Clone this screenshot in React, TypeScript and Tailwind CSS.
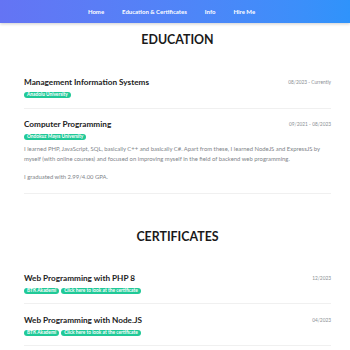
import React from 'react';

const education = [
  {
    title: 'Management Information Systems',
    school: 'Anadolu University',
    date: '08/2023 - Currently',
    text: [] as string[],
  },
  {
    title: 'Computer Programming',
    school: 'Ondokuz Mayıs University',
    date: '09/2021 - 08/2023',
    text: [
      'I learned PHP, JavaScript, SQL, basically C++ and basically C#. Apart from these, I learned NodeJS and ExpressJS by myself (with online courses) and focused on improving myself in the field of backend web programming.',
      'I graduated with 2.99/4.00 GPA.',
    ],
  },
];

const certificates = [
  { title: 'Web Programming with PHP 8', org: 'BTK Akademi', date: '12/2023' },
  { title: 'Web Programming with Node.JS', org: 'BTK Akademi', date: '04/2023' },
];

function Badge({ children }: { children: React.ReactNode }) {
  return (
    <span className="inline-flex items-center h-[6px] rounded-full bg-[#20c997] px-[3px] text-[4.8px] font-bold text-white">
      {children}
    </span>
  );
}

function Heading({ children }: { children: React.ReactNode }) {
  return (
    <h2 className="text-center text-[12.4px] font-bold text-[#1a1a1a] leading-[18px]">{children}</h2>
  );
}

function Row({ title, date }: { title: string; date: string }) {
  return (
    <div className="flex items-center justify-between h-[11px]">
      <h3 className="text-[8.2px] font-bold text-[#222] leading-[11px]">{title}</h3>
      <span className="text-[4.8px] text-[#8a8f94] leading-[11px]">{date}</span>
    </div>
  );
}

export default function App() {
  return (
    <div className="w-[350px] h-[350px] overflow-hidden bg-white" style={{ fontFamily: 'Lato, "Open Sans", sans-serif' }}>
      <nav className="h-[23px] bg-gradient-to-r from-[#6474f4] to-[#2f93fb] shadow-[0_1px_3px_rgba(0,0,0,0.2)] flex items-center justify-center gap-[18px] pr-[7px] text-[6px] font-bold text-white">
        <span>Home</span>
        <span>Education &amp; Certificates</span>
        <span>Info</span>
        <span>Hire Me</span>
      </nav>

      <div className="pl-6 pr-[19px]">
        <div className="mt-[8px]">
          <Heading>EDUCATION</Heading>
        </div>

        <div className="mt-[28px]">
          {education.map((e, i) => (
            <div key={e.title} className={`${i > 0 ? 'pt-[9.5px] pb-[11px]' : 'pb-[10px]'} border-b border-[#f0f0f0]`}>
              <Row title={e.title} date={e.date} />
              <div className="mt-[4px] flex">
                <Badge>{e.school}</Badge>
              </div>
              {e.text.length > 0 && (
                <div className="mt-[4px] space-y-[8px] text-[5.9px] leading-[10px] text-[#808489]">
                  {e.text.map((t) => (
                    <p key={t}>{t}</p>
                  ))}
                </div>
              )}
            </div>
          ))}
        </div>

        <div className="mt-[34px]">
          <Heading>CERTIFICATES</Heading>
        </div>

        <div className="mt-[27.5px]">
          {certificates.map((c, i) => (
            <div key={c.title} className={`${i > 0 ? 'pt-[10.5px]' : ''} pb-[9px] border-b border-[#f0f0f0]`}>
              <Row title={c.title} date={c.date} />
              <div className="mt-[4px] flex gap-[2px]">
                <Badge>{c.org}</Badge>
                <Badge>Click here to look at the certificate</Badge>
              </div>
            </div>
          ))}
        </div>
      </div>
    </div>
  );
}
